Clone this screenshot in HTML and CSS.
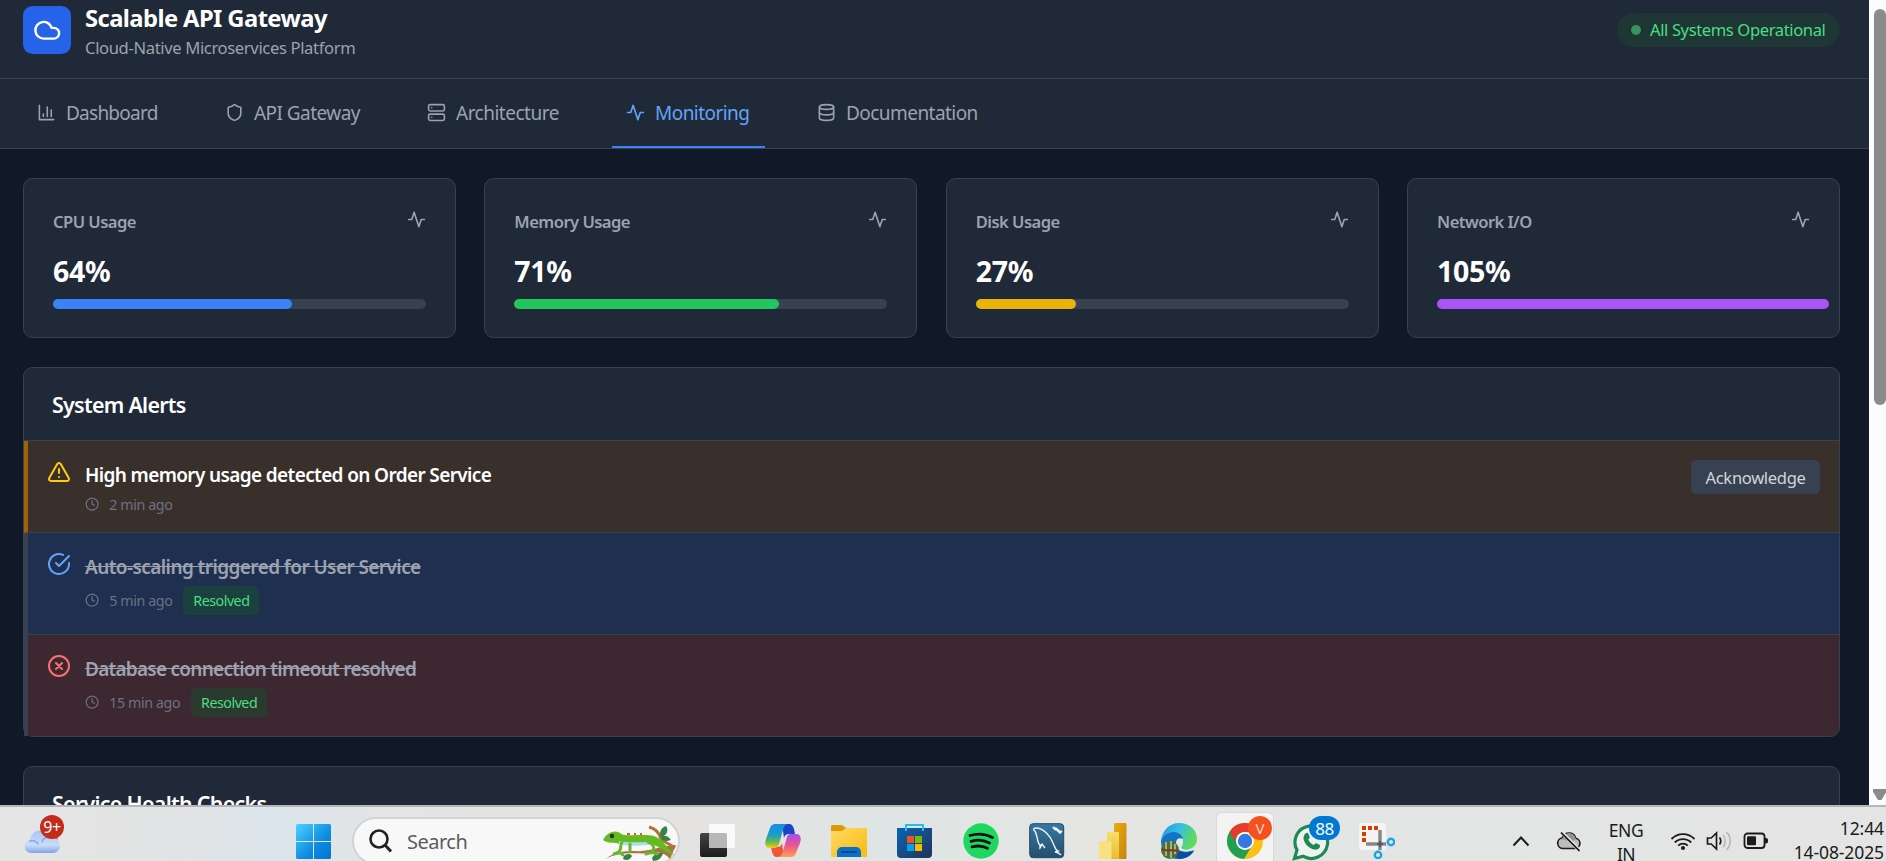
FILE: index.html
```html
<!DOCTYPE html>
<html lang="en">
<head>
<meta charset="utf-8">
<title>Scalable API Gateway</title>
<link rel="stylesheet" href="styles.css">
</head>
<body>
<svg class="defs" aria-hidden="true">
  <symbol id="activity" viewBox="0 0 24 24"><path d="M22 12h-4l-3 9L9 3l-3 9H2"/></symbol>
  <symbol id="clock" viewBox="0 0 24 24"><circle cx="12" cy="12" r="10"/><path d="M12 6v6l4 2"/></symbol>
</svg>
<div class="screen">
  <div class="browser">
    <div class="page">
      <header class="header">
        <div class="brand">
          <div class="logo"><svg class="icon" viewBox="0 0 24 24"><path d="M17.5 19H9a7 7 0 1 1 6.71-9h1.79a4.5 4.5 0 1 1 0 9Z"/></svg></div>
          <div class="brand-text">
            <h1 class="title">Scalable API Gateway</h1>
            <p class="subtitle">Cloud-Native Microservices Platform</p>
          </div>
        </div>
        <div class="status"><span class="dot"></span><span>All Systems Operational</span></div>
      </header>
      <nav class="nav">
        <a class="tab tab-dashboard"><svg class="icon" viewBox="0 0 24 24"><path d="M3 3v18h18M18 17V9M13 17V5M8 17v-3"/></svg>Dashboard</a>
        <a class="tab tab-gateway"><svg class="icon" viewBox="0 0 24 24"><path d="M20 13c0 5-3.500 7.500-7.660 8.950a1 1 0 0 1-.670-.010C7.500 20.500 4 18 4 13V6a1 1 0 0 1 1-1c2 0 4.500-1.200 6.240-2.720a1.170 1.170 0 0 1 1.520 0C14.510 3.810 17 5 19 5a1 1 0 0 1 1 1z"/></svg>API Gateway</a>
        <a class="tab tab-architecture"><svg class="icon" viewBox="0 0 24 24"><rect x="2" y="2" width="20" height="8" rx="2"/><rect x="2" y="14" width="20" height="8" rx="2"/><path d="M6 6h.01M6 18h.01"/></svg>Architecture</a>
        <a class="tab tab-monitoring active"><svg class="icon"><use href="#activity"/></svg>Monitoring</a>
        <a class="tab tab-documentation"><svg class="icon" viewBox="0 0 24 24"><ellipse cx="12" cy="5" rx="9" ry="3"/><path d="M3 5v14a9 3 0 0 0 18 0V5"/><path d="M3 12a9 3 0 0 0 18 0"/></svg>Documentation</a>
      </nav>
      <main class="main">
        <section class="metrics">
          <div class="card metric">
            <div class="metric-head"><span>CPU Usage</span><svg class="icon"><use href="#activity"/></svg></div>
            <div class="value">64%</div>
            <div class="track"><div class="fill blue" style="width:64%"></div></div>
          </div>
          <div class="card metric">
            <div class="metric-head"><span>Memory Usage</span><svg class="icon"><use href="#activity"/></svg></div>
            <div class="value">71%</div>
            <div class="track"><div class="fill green" style="width:71%"></div></div>
          </div>
          <div class="card metric">
            <div class="metric-head"><span>Disk Usage</span><svg class="icon"><use href="#activity"/></svg></div>
            <div class="value">27%</div>
            <div class="track"><div class="fill yellow" style="width:27%"></div></div>
          </div>
          <div class="card metric">
            <div class="metric-head"><span>Network I/O</span><svg class="icon"><use href="#activity"/></svg></div>
            <div class="value">105%</div>
            <div class="track"><div class="fill purple" style="width:105%"></div></div>
          </div>
        </section>
        <section class="card alerts">
          <h2 class="panel-title">System Alerts</h2>
          <div class="alert warning">
            <svg class="icon alert-icon" viewBox="0 0 24 24"><path d="m21.730 18-8-14a2 2 0 0 0-3.480 0l-8 14A2 2 0 0 0 4 21h16a2 2 0 0 0 1.730-3M12 9v4M12 17h.01"/></svg>
            <div class="alert-body">
              <p class="alert-text">High memory usage detected on Order Service</p>
              <div class="meta"><svg class="icon"><use href="#clock"/></svg><span>2 min ago</span></div>
            </div>
            <button class="ack">Acknowledge</button>
          </div>
          <div class="alert info resolved">
            <svg class="icon alert-icon" viewBox="0 0 24 24"><path d="M22 11.080V12a10 10 0 1 1-5.930-9.140"/><path d="m9 11 3 3L22 4"/></svg>
            <div class="alert-body">
              <p class="alert-text">Auto-scaling triggered for User Service</p>
              <div class="meta"><svg class="icon"><use href="#clock"/></svg><span>5 min ago</span><span class="badge">Resolved</span></div>
            </div>
          </div>
          <div class="alert error resolved">
            <svg class="icon alert-icon" viewBox="0 0 24 24"><circle cx="12" cy="12" r="10"/><path d="m15 9-6 6M9 9l6 6"/></svg>
            <div class="alert-body">
              <p class="alert-text">Database connection timeout resolved</p>
              <div class="meta"><svg class="icon"><use href="#clock"/></svg><span>15 min ago</span><span class="badge">Resolved</span></div>
            </div>
          </div>
        </section>
        <section class="card health"><h2 class="panel-title">Service Health Checks</h2></section>
      </main>
    </div>
    <div class="scrollbar"><div class="thumb"></div><div class="arrow"></div></div>
  </div>

  <footer class="taskbar">
    <div class="weather">
      <svg width="44" height="48" viewBox="0 0 44 48">
        <defs><linearGradient id="cl" x1="0" y1="0" x2="0" y2="1"><stop offset="0" stop-color="#a9c3f3"/><stop offset=".65" stop-color="#c9dcf8"/><stop offset="1" stop-color="#7fa4e6"/></linearGradient></defs>
        <circle cx="29" cy="27" r="9" fill="#f47a12"/>
        <path d="M11 43a6.500 6.500 0 0 1-1-12.900C11 24 15 20.500 20 20.500c4.500 0 8 2.600 9 6.500 5-.6 11 2.500 11 8.500 0 4.500-3 7.500-7.500 7.500z" fill="url(#cl)"/>
        <path d="M9.500 31c4-.8 7.500.8 9 3.500M22 32c1-3 3.500-5 7-5" fill="none" stroke="#86a8e5" stroke-width="1.500"/>
      </svg>
      <span class="count red">9+</span>
    </div>
    <svg class="start" width="36" height="36" viewBox="0 0 36 36"><defs><linearGradient id="win" x1="0" y1="0" x2="1" y2="1"><stop offset="0" stop-color="#4bd2ff"/><stop offset=".6" stop-color="#0d8be0"/><stop offset="1" stop-color="#0074cf"/></linearGradient></defs><path fill="url(#win)" d="M1.500 0H17v17H0V1.500A1.500 1.500 0 0 1 1.500 0zM18 0h15.500A1.500 1.500 0 0 1 35 1.500V17H18zM0 18h17v17H1.500A1.500 1.500 0 0 1 0 33.500zM18 18h17v15.500a1.500 1.500 0 0 1-1.500 1.500H18z"/></svg>
    <div class="search">
      <svg width="24" height="24" viewBox="0 0 24 24" fill="none" stroke="#222" stroke-width="2.600"><circle cx="10" cy="10" r="8.500"/><path d="m16 16 6 6.500" stroke-width="3"/></svg>
      <span>Search</span>
      <svg class="lizard" width="76" height="36" viewBox="0 0 76 36">
        <path d="M4 34c9-8 19-8 28-8 12 1 22-3 32-5l10-1-6 14c-3-4-10-8-16-6-15 2-33-3-48 6z" fill="#a8743f"/>
        <path d="M47 2c8 2 11 8 12 12 2 3 8 4 14 9" fill="none" stroke="#b87436" stroke-width="3"/>
        <path d="M58 10c0-6 3-8 6-9 3 4 1 9-4 11zM65 16c-4 0-6-2-7-5 5-1 9 0 11 4zM22 31c4-3 7-2 8 0-2 4-5 5-9 3zM50 33c3-5 7-5 11-5-1 5-5 8-10 8z" fill="#348347"/>
        <path d="M1 15C4 9 10 5 16 7c3 1 4 3 7 3 10 1 20-1 29 1 9 3 14 13 20 19-9-3-15-9-23-11-9-2-20 2-31 0-5-2-12 0-17-4z" fill="#62bc20"/>
        <path d="M17 16c8 2 18 1 30 1l5 3c-12 0-24 2-35-1z" fill="#a7dcf0"/>
        <path d="M20 17c-3 4 1 6-4 11M12 29l5-2 4 3M28 19v7M46 17c4 1 8 5 4 11M44 29l6-2 5 2" fill="none" stroke="#6cb62c" stroke-width="3" stroke-linecap="round" stroke-linejoin="round"/>
        <path d="M25 9h3M32 9h2M38 9h2" stroke="#e5502d" stroke-width="1.800"/><circle cx="10" cy="11" r="2.200" fill="#24372b"/>
      </svg>
    </div>
    <div class="apps">
      <div class="app"><svg width="36" height="36" viewBox="0 0 36 36"><defs><linearGradient id="dk" x1="0" y1="0" x2="0" y2="1"><stop offset="0" stop-color="#444"/><stop offset="1" stop-color="#1c1c1c"/></linearGradient></defs><rect x="1" y="10" width="27" height="24" rx="2" fill="url(#dk)"/><rect x="10" y="1" width="26" height="24" rx="1.500" fill="#fafafa"/><path d="M10 10h16a2 2 0 0 1 2 2v13H11a1 1 0 0 1-1-1z" fill="#b7b7b7"/></svg></div>
      <div class="app"><svg width="36" height="36" viewBox="0 0 36 36"><defs>
        <linearGradient id="cp1" x1="0" y1="0" x2="0" y2="1"><stop offset="0" stop-color="#148de8"/><stop offset=".45" stop-color="#199dc9"/><stop offset=".75" stop-color="#68b94c"/><stop offset="1" stop-color="#f2cc14"/></linearGradient>
        <linearGradient id="cp2" x1="0" y1="0" x2="0" y2="1"><stop offset="0" stop-color="#a24df0"/><stop offset=".5" stop-color="#ee5590"/><stop offset="1" stop-color="#ffa052"/></linearGradient></defs>
        <path d="M17 1h7c3 0 4 2 5 5l1 5h-6c-3 0-4 1-5 4z" fill="#1747c9"/><path d="M19 34h-7c-3 0-4-2-5-5l-1-5h6c3 0 4-1 5-4z" fill="#f0563b"/>
        <path d="M10 1h13c-3 0-4 3-5 6l-4 14c-1 3-3 4-5 4H5c-4 0-6-3-4-9l4-11c1-3 3-4 5-4z" fill="url(#cp1)"/>
        <path d="M26 34H12c4 0 5-3 6-6l4-14c1-3 3-3 5-3h4c4 0 6 3 4 9l-4 10c-1 3-3 4-5 4z" fill="url(#cp2)"/></svg></div>
      <div class="app"><svg width="36" height="36" viewBox="0 0 36 36"><defs><linearGradient id="fo" x1="0" y1="0" x2="1" y2="1"><stop offset="0" stop-color="#ffda69"/><stop offset="1" stop-color="#fbb90e"/></linearGradient></defs><path d="M0 13V3.500A1.500 1.500 0 0 1 1.500 2H10c3 0 3 3 6 3v8z" fill="#dd9a05"/><path d="M0 8h11l4-3h19.500A1.500 1.500 0 0 1 36 6.500V34H0z" fill="url(#fo)"/><path d="M6 34v-5a5 5 0 0 1 5-5h14a5 5 0 0 1 5 5v5z" fill="#0870c7"/><path d="M11 29h14" stroke="#04468c" stroke-width="2" stroke-linecap="round"/></svg></div>
      <div class="app"><svg width="36" height="36" viewBox="0 0 36 36"><defs><linearGradient id="st" x1="0" y1="0" x2="1" y2="1"><stop offset="0" stop-color="#0867b5"/><stop offset="1" stop-color="#243158"/></linearGradient></defs><path d="M0 5h35v26a4 4 0 0 1-4 4H4a4 4 0 0 1-4-4z" fill="url(#st)"/><path d="M9 8V2h17v6" fill="none" stroke="#22bdf0" stroke-width="2"/><path d="M10 13h7v7h-7z" fill="#f25022"/><path d="M18 13h7v7h-7z" fill="#7fba00"/><path d="M10 21h7v7h-7z" fill="#00a4ef"/><path d="M18 21h7v7h-7z" fill="#ffb900"/></svg></div>
      <div class="app"><svg width="36" height="36" viewBox="0 0 36 36"><circle cx="18" cy="18" r="17.700" fill="#1ed760"/><path d="M7 12.500c8-2.500 16-1.500 22.500 2M8 18.300c7-2 13-1.200 18.500 1.700M9 23.800c6-1.500 11-1 15.500 1.500" fill="none" stroke="#111" stroke-width="2.800" stroke-linecap="round"/></svg></div>
      <div class="app"><svg width="36" height="36" viewBox="0 0 36 36"><defs><linearGradient id="my" x1="0" y1="0" x2="0" y2="1"><stop offset="0" stop-color="#3678a2"/><stop offset="1" stop-color="#254f6c"/></linearGradient></defs><rect x=".7" y=".7" width="34" height="34" rx="3.500" fill="url(#my)" stroke="#1f4b68"/><path d="M32 32c-2-2-4-3-6-3l3-1c-3-1-3-4-5-8C21 12 14 5 7 5c-2 0-3 1-2 2 2 2 2 4 3 7 1 4 1 7 3 8l0 3c1-1 1-3 2-4l3 4" fill="none" stroke="#eef5f9" stroke-width="1.400"/><path d="m26 5 6 5" stroke="#eef5f9" stroke-width="2.500"/><path d="M24 4l3 3M30 10l3-2" stroke="#eef5f9" stroke-width="2"/></svg></div>
      <div class="app"><svg width="36" height="36" viewBox="0 0 36 36"><defs><linearGradient id="pb" x1="0" y1="0" x2="1" y2="1"><stop offset="0" stop-color="#e8ad10"/><stop offset="1" stop-color="#c98212"/></linearGradient><linearGradient id="pc" x1="0" y1="0" x2="0" y2="1"><stop offset="0" stop-color="#f8de6a"/><stop offset="1" stop-color="#e9bb2e"/></linearGradient></defs><rect x="19" y="0" width="12.500" height="36" rx="1.200" fill="url(#pb)"/><path d="M12 10a1 1 0 0 1 1-1h10a1 1 0 0 1 1 1v26H12z" fill="url(#pc)"/><path d="M4 19a1 1 0 0 1 1-1h10.500a1 1 0 0 1 1 1v17H5a1 1 0 0 1-1-1z" fill="#f8e080"/></svg></div>
      <div class="app"><svg width="36" height="36" viewBox="0 0 36 36"><defs><linearGradient id="ed" x1="0" y1="0" x2="1" y2=".4"><stop offset="0" stop-color="#1b93df"/><stop offset=".5" stop-color="#35bfe2"/><stop offset="1" stop-color="#5fdc5c"/></linearGradient></defs><path d="M0 18C1 8 8 0 18 0c11 0 18 7 18 16 0 7-6 11-12 11-3 0-4-1-4-2 1-2 2-3 2-6 0-3-3-5-7-5-7 0-11 5-15 4z" fill="url(#ed)"/><path d="M0 18c2-5 7-9 13-9 5 0 9 4 9 8-3-2-7 0-7 5 0 6 8 8 18 5-3 6-9 9-16 9C7 36 0 28 0 18z" fill="#1673c4"/><path d="M13 18c-1 9 8 14 20 10-3 5-9 8-15 8-6-2-8-11-5-18z" fill="#0b4e9d"/><path d="M15 20c0-4 3-6 7-4 0 4-3 6-2 9 4 3 9 2 14 0-1 2-3 3-5 3-8 2-14-2-14-8z" fill="#e4e8e8"/><circle cx="9" cy="27" r="9" fill="#4d703a"/><path d="M5 19v14M10 18v17M14 21v10" stroke="#a3b66b" stroke-width="2"/><path d="M1 26c4 3 10 0 16 2" stroke="#82302b" stroke-width="2" fill="none"/></svg></div>
      <div class="app current"><svg width="36" height="36" viewBox="0 0 36 36"><circle cx="18" cy="18" r="18" fill="#fbc116"/><path d="M2.400 9A18 18 0 0 0 17 36l8.500-14L18 18z" fill="#22a052"/><path d="M18 9H33.600A18 18 0 0 0 2.400 9l6 9.500A9 9 0 0 1 18 9z" fill="#e33b2e"/><circle cx="18" cy="18" r="9" fill="#fff"/><circle cx="18" cy="18" r="7.200" fill="#3478e5"/></svg><span class="count orange">V</span></div>
      <div class="app"><svg width="38" height="38" viewBox="0 0 38 38"><path d="M2.500 35.500 5 27A16.300 16.300 0 1 1 11 33.200z" fill="#eef3f0" stroke="#1c8957" stroke-width="3.200"/><path d="M13.500 10.500c1-1 2.500-1 3 .4l1.200 3c.3 1-.9 2-1.500 2.700 1.200 2.500 3 4.200 5.500 5.400.8-.8 1.700-2.200 2.700-1.700l3 1.500c1 .5.700 1.700.2 2.700-1 1.800-3.400 2.500-5.500 2-5.500-1.500-9-5-10.500-10.300-.5-2 .4-4.200 1.900-5.700z" fill="#1c8957"/></svg><span class="count pill">88</span></div>
      <div class="app"><svg width="36" height="36" viewBox="0 0 36 36"><rect x="0" y="0" width="27" height="27" rx="3" fill="#f5f4f3"/><path d="M3 3h4v4H3zM9 3h4v4H9zM15 3h4v4h-4zM3 9h4v4H3zM3 15h4v4H3z" fill="#d83b01"/><path d="M7 21h20M21 7v20" stroke="#85898c" stroke-width="3.500"/><path d="M18 21h6M21 18v6" stroke="#55595c" stroke-width="2"/><circle cx="32" cy="19" r="3.200" fill="none" stroke="#1aa5e3" stroke-width="2.400"/><circle cx="19" cy="32" r="3.200" fill="none" stroke="#1aa5e3" stroke-width="2.400"/></svg></div>
    </div>
    <div class="tray">
      <svg class="chev" width="18" height="12" viewBox="0 0 18 12"><path d="m1.500 10.500 7.500-8 7.500 8" fill="none" stroke="#1b1b1b" stroke-width="2"/></svg>
      <svg class="cloud-off" width="26" height="22" viewBox="0 0 26 22"><path d="M7 17.500a5.300 5.300 0 0 1-1-10.500C7.500 3.500 10 2 13 2c3.500 0 6 2.300 6.700 5.200A5.200 5.200 0 0 1 19 17.500z" fill="#bdbdbd" stroke="#1b1b1b" stroke-width="1.600"/><path d="M6 8c1.500-4 4-6 7-6 4 0 6 3 7 6l-5 3z" fill="#929292"/><path d="M6 1.500 23.500 19.500" stroke="#e5e5e5" stroke-width="3.600"/><path d="M5 1.500 23.500 20" stroke="#111" stroke-width="1.700"/></svg>
      <div class="lang"><span>ENG</span><span>IN</span></div>
      <svg class="wifi" width="26" height="20" viewBox="0 0 26 20" fill="none" stroke="#1b1b1b" stroke-width="1.800"><path d="M1.500 8a16 16 0 0 1 23 0M4.800 11.500a11.500 11.500 0 0 1 16.400 0M8.200 14.700a6.800 6.800 0 0 1 9.600 0"/><circle cx="13" cy="17" r="2.100" fill="#1b1b1b" stroke="none"/></svg>
      <svg class="vol" width="26" height="20" viewBox="0 0 26 20" fill="none" stroke="#1b1b1b" stroke-width="1.700"><path d="M1.500 7h3.700L10.500 2v16l-5.300-5H1.500zM13.500 6.500c1.500 2 1.500 5 0 7"/><path d="M17 3.800c3 3.500 3 9 0 12.400M20.500 1.200c5 5 5 12.500 0 17.600" stroke="#b9b9b9"/></svg>
      <svg class="bat" width="26" height="18" viewBox="0 0 26 18"><rect x="1.500" y="1.500" width="20" height="14.500" rx="3" fill="none" stroke="#1b1b1b" stroke-width="1.800"/><rect x="4" y="4.200" width="9" height="9" rx="1" fill="#1b1b1b"/><path d="M22 6h1a2 2 0 0 1 2 2v1.500a2 2 0 0 1-2 2h-1z" fill="#1b1b1b"/></svg>
      <div class="time"><span>12:44</span><span>14-08-2025</span></div>
    </div>
  </footer>
</div>
</body>
</html>
```
FILE: styles.css
```css
* { box-sizing: border-box; margin: 0; padding: 0; }
body { width: 1886px; height: 861px; overflow: hidden; font-family: "Noto Sans", "Open Sans", sans-serif; background: #111827; color: #fff; }
.defs { display: none; }
.screen { display: flex; flex-direction: column; height: 861px; overflow: hidden; }
.browser { display: flex; height: 805px; overflow: hidden; }
.page { width: 1869px; height: 805px; overflow: hidden; background: #111827; }
.icon { width: 19px; height: 19px; flex: none; fill: none; stroke: currentColor; stroke-width: 2; stroke-linecap: round; stroke-linejoin: round; }

.header { display: flex; justify-content: space-between; align-items: flex-start; height: 79px; padding: 0 29px 0 23px; background: #1f2937; border-bottom: 1px solid #374151; }
.brand { display: flex; gap: 14px; padding-top: 6px; }
.logo { display: flex; align-items: center; justify-content: center; width: 48px; height: 48px; border-radius: 9.5px; background: #2563eb; }
.logo .icon { width: 28.5px; height: 28.5px; }
.brand-text { margin-top: -3px; }
.title { font-size: 23.75px; line-height: 31px; font-weight: 700; letter-spacing: -.58px; }
.subtitle { font-size: 16.6px; line-height: 27px; letter-spacing: -.36px; color: #9ca3af; }
.status { display: flex; align-items: center; gap: 9px; width: 223px; height: 34px; margin-top: 13px; padding-left: 14px; border-radius: 17px; background: #1e3634; color: #4ade80; font-size: 16.6px; line-height: 34px; letter-spacing: -.4px; white-space: nowrap; }
.dot { width: 10px; height: 10px; border-radius: 50%; background: #38945e; }

.nav { display: flex; gap: 38px; height: 70px; padding-left: 23px; background: #1f2937; border-bottom: 1px solid #374151; }
.tab { display: flex; align-items: center; gap: 10px; height: 69px; padding: 0 0 0 14px; border-bottom: 2px solid transparent; color: #9ca3af; font-size: 19px; letter-spacing: -.55px; white-space: nowrap; }
.tab-dashboard { width: 150px; letter-spacing: -.75px; }
.tab-gateway { width: 164px; }
.tab-architecture { width: 161px; letter-spacing: -.5px; }
.tab-monitoring { width: 153px; }
.tab-documentation { width: 160px; }
.tab.active { color: #60a5fa; border-color: #3b82f6; }

.main { display: flex; flex-direction: column; gap: 29px; padding: 29px 29px 0 23px; }
.card { background: #1f2937; border: 1px solid #374151; border-radius: 9.5px; }
.metrics { display: grid; grid-template-columns: repeat(4, 1fr); gap: 28.4px; }
.metric { height: 160px; padding: 28px 29px; }
.metric-head { display: flex; justify-content: space-between; align-items: center; height: 28px; color: #9ca3af; font-size: 16.6px; font-weight: 600; letter-spacing: -.55px; }
.metric-head .icon { margin-bottom: 3px; }
.value { height: 38px; margin-top: 17px; line-height: 38px; font-size: 28.5px; font-weight: 700; letter-spacing: -.3px; }
.track { height: 10px; margin-top: 9px; border-radius: 5px; background: #374151; }
.fill { height: 10px; border-radius: 5px; }
.blue { background: #3b82f6; }
.green { background: #22c55e; }
.yellow { background: #eab308; }
.purple { background: #a855f7; }

.alerts { height: 370px; }
.panel-title { height: 73px; padding-left: 28px; border-bottom: 1px solid #374151; font-size: 21.4px; font-weight: 600; line-height: 73px; letter-spacing: -.7px; }
.alert { display: flex; align-items: flex-start; height: 102px; padding: 19px 19px 0 19px; border-left: 4px solid #374151; border-bottom: 1px solid #374151; }
.alert-icon { width: 24px; height: 24px; margin-right: 14px; }
.alert-body { flex: 1; }
.alert-text { height: 31px; line-height: 31px; font-size: 19px; font-weight: 600; letter-spacing: -.63px; }
.resolved .alert-text { color: #9ca3af; text-decoration: line-through; letter-spacing: -.58px; }
.warning { height: 92px; background: #39302c; border-left-color: #a16207; }
.info { background: #1f2f50; }
.error { height: 101px; background: #3d2730; border-bottom: 0; border-radius: 0 0 9px 0; }
.error .alert-text { letter-spacing: -.75px; }
.warning .alert-icon { color: #facc15; }
.info .alert-icon { color: #60a5fa; }
.error .alert-icon { color: #f87171; }
.meta { display: flex; align-items: center; height: 26px; color: #6b7280; font-size: 14.25px; letter-spacing: -.4px; }
.resolved .meta { height: 29px; margin-top: 3px; }
.meta .icon { width: 14.25px; height: 14.25px; margin-right: 10px; }
.badge { height: 29px; width: 76px; margin-left: 11px; border-radius: 5px; background: #1b413f; color: #4ade80; text-align: center; line-height: 29px; letter-spacing: -.5px; }
.error .badge { background: #2b3a2f; }
.ack { width: 129px; height: 34px; border: 0; border-radius: 5px; background: #374151; color: #d1d5db; font: 400 16.6px "Noto Sans", sans-serif; letter-spacing: -.35px; }
.health { height: 200px; }

.scrollbar { width: 17px; height: 805px; padding: 9px 0 0 5px; background: #fcfcfc; display: flex; flex-direction: column; justify-content: space-between; }
.thumb { width: 12px; height: 396px; border-radius: 6px; background: #8b8b8b; }
.arrow { width: 13px; height: 11px; margin: 0 0 5px -1px; background: #8b8b8b; clip-path: polygon(0 0, 100% 0, 100% 30%, 65% 100%, 38% 100%, 0 25%); }

.taskbar { display: flex; height: 56px; border-top: 2px solid #b5b5b5; background: linear-gradient(90deg, #e5e5e5 0, #e2e3e4 180px, #dbe5ec 270px, #e4e4e4 400px, #e5e3e1 680px, #dfe5e5 900px, #e5e5e2 1080px, #e3e5e5 1300px, #e4e4e4 100%); color: #1b1b1b; overflow: hidden; }
.weather { position: relative; width: 296px; padding: 3px 0 0 20px; flex: none; }
.count { position: absolute; display: flex; align-items: center; justify-content: center; color: #fff; }
.red { left: 40px; top: 8px; width: 24px; height: 24px; border-radius: 50%; background: #c42b1c; font-size: 16px; letter-spacing: -.5px; }
.start { flex: none; margin: 17px 20px 0 0; }
.search { display: flex; flex: none; width: 328px; height: 48px; margin-top: 10px; padding: 10px 0 0 15px; border: 2px solid #d3d3d3; border-radius: 24px; background: #f8f8f8; color: #5c5c5c; font-size: 20px; line-height: 24px; letter-spacing: -.5px; }
.search span { margin: 1px 0 0 14px; width: 195px; }
.search .lizard { margin-top: -4px; flex: none; }
.apps { display: flex; width: 726px; margin-left: 4px; flex: none; }
.app { position: relative; display: flex; justify-content: center; width: 66px; padding-top: 16px; }
.app svg { display: block; flex: none; }
.current { width: 58px; margin: 5px 4px 0; padding-top: 11px; border: 1px solid #d8d8d8; border-bottom: 0; border-radius: 6px 6px 0 0; background: #f3f3f3; }
.current svg { margin-top: -1px; }
.orange { left: 31px; top: 3px; width: 24px; height: 24px; border-radius: 50%; background: #f4511e; color: #ffd7ca; font-size: 15px; }
.pill { left: 31px; top: 9px; width: 31px; height: 24px; border-radius: 12px; background: #0078d4; font-size: 17px; letter-spacing: -.5px; }
.tray { display: flex; margin-left: 102px; flex: none; }
.chev { margin-top: 28px; }
.cloud-off { margin: 24px 0 0 26px; }
.lang, .time { display: flex; flex-direction: column; font-size: 17.5px; line-height: 24px; letter-spacing: -.5px; }
.lang { width: 40px; margin: 11px 0 0 24px; align-items: center; }
.wifi { margin: 24px 0 0 24px; }
.vol { margin: 24px 0 0 10px; }
.bat { margin: 25px 0 0 11px; }
.time { width: 115px; margin-top: 9px; align-items: flex-end; letter-spacing: -.1px; }
```
